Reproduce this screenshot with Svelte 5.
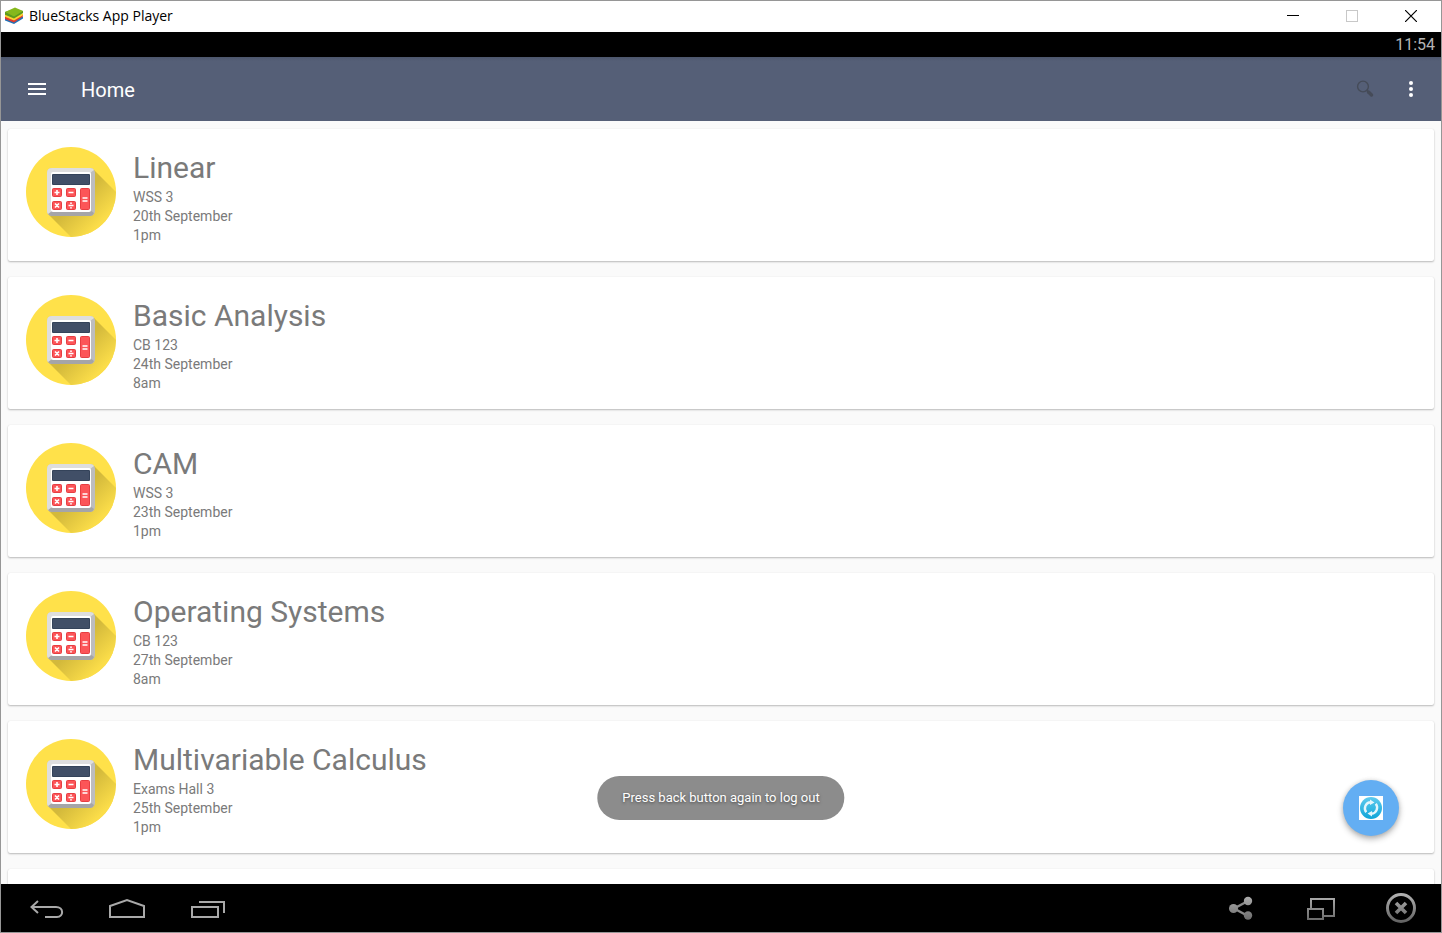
<script>
  const exams = [
    { name: 'Linear', venue: 'WSS 3', date: '20th September', time: '1pm' },
    { name: 'Basic Analysis', venue: 'CB 123', date: '24th September', time: '8am' },
    { name: 'CAM', venue: 'WSS 3', date: '23th September', time: '1pm' },
    { name: 'Operating Systems', venue: 'CB 123', date: '27th September', time: '8am' },
    { name: 'Multivariable Calculus', venue: 'Exams Hall 3', date: '25th September', time: '1pm' },
    { name: '', venue: '', date: '', time: '' }
  ];
</script>

<svg class="defs" width="0" height="0" aria-hidden="true">
  <defs>
    <linearGradient id="shade" gradientUnits="userSpaceOnUse" x1="40" y1="40" x2="75" y2="75">
      <stop offset="0.35" stop-color="#d3b93b" />
      <stop offset="1" stop-color="#fbdd49" />
    </linearGradient>
    <linearGradient id="metal" gradientUnits="userSpaceOnUse" x1="0" y1="0" x2="0" y2="30">
      <stop offset="0" stop-color="#b4b4b4" />
      <stop offset="1" stop-color="#606060" />
    </linearGradient>
    <linearGradient id="aqua" x1="0" y1="0" x2="0" y2="1">
      <stop offset="0" stop-color="#5fcbee" />
      <stop offset="1" stop-color="#0fa5d8" />
    </linearGradient>
    <clipPath id="disc"><circle cx="45" cy="45" r="45" /></clipPath>
  </defs>
</svg>

{#snippet calculator()}
  <svg class="calculator" width="90" height="90" viewBox="0 0 90 90" aria-hidden="true">
    <circle cx="45" cy="45" r="45" fill="#ffe14a" />
    <path d="M68 23 L98 53 L98 98 L53 98 L22 67 Z" fill="url(#shade)" clip-path="url(#disc)" />
    <rect x="21" y="21" width="48" height="48" rx="5" fill="#bdbdbf" />
    <path d="M22 66 L26 63 H64 L68 66 Q67 69 64 69 H26 Q23 69 22 66Z" fill="#a5a5a8" />
    <path d="M26 21 H64 Q67 21 68 23 L64 26 H26 V64 L22 67 Q21 66 21 64 V26 Q21 21 26 21Z" fill="#dedede" />
    <rect x="25" y="25" width="40" height="40" rx="2" fill="#fff" />
    <rect x="26" y="27" width="38" height="11" rx="1" fill="#34435a" />
    <rect x="27" y="28" width="36" height="9" fill="#414f67" />
    <g fill="#fc5558" stroke="#e73e42">
      <rect x="26.500" y="41.500" width="9" height="8" rx="1" />
      <rect x="40.500" y="41.500" width="9" height="8" rx="1" />
      <rect x="26.500" y="54.500" width="9" height="8" rx="1" />
      <rect x="40.500" y="54.500" width="9" height="8" rx="1" />
      <rect x="54.500" y="41.500" width="9" height="21" rx="1" />
    </g>
    <path d="M28.500 45.500 H33.500 M31 43 V48 M42.500 45.500 H47.500 M29 56.500 L33 60.500 M33 56.500 L29 60.500 M42.500 58.500 H47.500 M56.500 51 H61.500 M56.500 54 H61.500" stroke="#fff" stroke-width="1.600" />
    <circle cx="45" cy="56.200" r="0.900" fill="#fff" />
    <circle cx="45" cy="60.800" r="0.900" fill="#fff" />
  </svg>
{/snippet}

<div class="window">
  <header class="titlebar">
    <svg width="18" height="18" viewBox="0 0 18 18" aria-hidden="true">
      <path d="M0 10 H18 V11.500 L9 17 L0 13.500Z" fill="#2073b8" />
      <path d="M0 8 H18 V9.500 L9 15.500 L0 12Z" fill="#e13a2e" />
      <path d="M0 6.500 H18 V8.200 L9 13.500 L0 9.800Z" fill="#fbd330" />
      <path d="M0 5 L9 2 L18 4 V6 L9 11.500 L0 7.800Z" fill="#5b9a1d" />
      <path d="M0 5 L10 0.500 L18 4 L9 9.500Z" fill="#86b81c" />
    </svg>
    <h1>BlueStacks App Player</h1>
    <div class="window-controls">
      <button aria-label="Minimize">
        <svg width="12" height="12" viewBox="0 0 12 12"><path d="M0 5.500H12" stroke="#000" /></svg>
      </button>
      <button aria-label="Maximize" disabled>
        <svg width="12" height="12" viewBox="0 0 12 12"><rect x="0.500" y="0.500" width="11" height="11" fill="none" stroke="#c8c8c8" /></svg>
      </button>
      <button aria-label="Close">
        <svg width="12" height="12" viewBox="0 0 12 12"><path d="M0 0L12 12M12 0L0 12" stroke="#000" stroke-width="1.200" /></svg>
      </button>
    </div>
  </header>

  <div class="statusbar"><time>11:54</time></div>

  <nav class="appbar" aria-label="App bar">
    <button aria-label="Open menu">
      <svg width="18" height="12" viewBox="0 0 18 12"><path d="M0 1H18M0 6H18M0 11H18" stroke="#fff" stroke-width="2" /></svg>
    </button>
    <h2>Home</h2>
    <button aria-label="Search">
      <svg width="18" height="18" viewBox="0 0 18 18" fill="none" stroke="#454b58">
        <circle cx="7" cy="6.500" r="5.400" stroke-width="1.400" />
        <path d="M10.500 10L12.500 12" stroke-width="1.500" />
        <path d="M12.500 12L15.500 15" stroke-width="3.400" stroke-linecap="round" />
      </svg>
    </button>
    <button aria-label="More options">
      <svg width="4" height="16" viewBox="0 0 4 16" fill="#fff"><circle cx="2" cy="2" r="2" /><circle cx="2" cy="8" r="2" /><circle cx="2" cy="14" r="2" /></svg>
    </button>
  </nav>

  <main>
    <ul class="exams">
      {#each exams as exam}
        <li class="card">
          {@render calculator()}
          <div class="details">
            <h3>{exam.name}</h3>
            <p>{exam.venue}</p>
            <p>{exam.date}</p>
            <p>{exam.time}</p>
          </div>
        </li>
      {/each}
    </ul>
    <div class="toast" role="status">Press back button again to log out</div>
    <button class="fab" aria-label="Refresh">
      <svg width="24" height="24" viewBox="0 0 24 24">
        <rect width="24" height="24" fill="#fff" />
        <circle cx="12" cy="12" r="11" fill="url(#aqua)" />
        <g fill="none" stroke="#e4f6fc" stroke-width="2.400">
          <path d="M7.200 16.200 A6.300 6.300 0 0 1 11 6.200" />
          <path d="M16.800 7.800 A6.300 6.300 0 0 1 13 17.800" />
        </g>
        <path d="M11 3.500 L15.500 6.500 L11 9Z M13 20.500 L8.500 17.500 L13 15Z" fill="#e4f6fc" />
      </svg>
    </button>
  </main>

  <footer class="navbar">
    <button aria-label="Back">
      <svg width="34" height="30" viewBox="0 -1 34 30" fill="none" stroke="#a9a9a9" stroke-width="2">
        <path d="M1.500 13H26C34 13 34 23 27 23H15M8 7L1.500 13L8 19" />
      </svg>
    </button>
    <button aria-label="Home">
      <svg width="36" height="30" viewBox="0 -1 36 30" fill="none" stroke="#a9a9a9" stroke-width="2">
        <path d="M1 23V12L18 6L35 12V23Z" />
      </svg>
    </button>
    <button aria-label="Recent apps">
      <svg width="36" height="30" viewBox="0 -1 36 30" fill="none" stroke="#a9a9a9" stroke-width="2">
        <path d="M3 13H29V23H3ZM10 8H35V19" />
      </svg>
    </button>
    <button class="share" aria-label="Share">
      <svg width="24" height="30" viewBox="0 -1 24 30" fill="url(#metal)">
        <path d="M5 14.500L19 7M5 14.500L19 22" stroke="#8a8a8a" stroke-width="2.500" />
        <circle cx="4.500" cy="14.500" r="4.500" /><circle cx="19" cy="7" r="4.200" /><circle cx="19" cy="21.500" r="4.200" />
      </svg>
    </button>
    <button aria-label="Resize window">
      <svg width="28" height="30" viewBox="0 -1 28 30" fill="none" stroke="url(#metal)" stroke-width="2">
        <path d="M4 15V5H27V22H17M1 15H16V25H1Z" />
      </svg>
    </button>
    <button aria-label="Close app">
      <svg width="30" height="30" viewBox="0 0 30 30" fill="none" stroke="url(#metal)">
        <circle cx="15" cy="15" r="13.500" stroke-width="3" />
        <path d="M10 10L20 20M20 10L10 20" stroke-width="3.600" />
      </svg>
    </button>
  </footer>
</div>

<style>
  :global(body) {
    margin: 0;
    overflow: hidden;
  }
  .defs {
    position: absolute;
  }
  .window {
    display: flex;
    flex-direction: column;
    box-sizing: border-box;
    height: 100vh;
    border: 1px solid #969696;
    background: #fafafa;
    font-family: Roboto, sans-serif;
  }
  h1, h2, h3, p, ul {
    margin: 0;
    padding: 0;
    font-weight: 400;
  }
  svg {
    display: block;
    flex: none;
  }
  button {
    display: flex;
    align-items: center;
    justify-content: center;
    padding: 0;
    border: 0;
    background: none;
  }
  .titlebar {
    display: flex;
    align-items: center;
    gap: 6px;
    box-sizing: border-box;
    height: 31px;
    padding: 0 0 1px 4px;
    background: #fff;
  }
  h1 {
    flex: 1;
    font: 14px/20px "Open Sans", sans-serif;
    color: #000;
  }
  .window-controls {
    display: flex;
    gap: 13px;
    padding-right: 7px;
  }
  .window-controls button {
    width: 46px;
    height: 30px;
  }
  .statusbar {
    height: 25px;
    padding-right: 6px;
    background: #000;
    color: #b5b5b5;
    font-size: 16px;
    line-height: 25px;
    text-align: right;
  }
  .appbar {
    display: flex;
    align-items: center;
    height: 64px;
    padding: 0 6px 0 12px;
    background: linear-gradient(#4c566c, #555f77 4px);
  }
  .appbar button {
    width: 48px;
    height: 48px;
  }
  .appbar button:last-child {
    margin-left: -2px;
  }
  h2 {
    flex: 1;
    padding: 2px 0 0 20px;
    font-size: 20px;
    line-height: 28px;
    color: #fff;
  }
  main {
    position: relative;
    flex: 1;
    min-height: 0;
    overflow: hidden;
  }
  .exams {
    display: flex;
    flex-direction: column;
    gap: 16px;
    padding: 8px 7px;
    list-style: none;
  }
  .card {
    display: flex;
    gap: 17px;
    box-sizing: border-box;
    min-height: 132px;
    padding: 18px 18px 16px;
    border-radius: 2px;
    background: #fff;
    box-shadow: 0 1px 2px rgba(0, 0, 0, 0.26), 0 0 1px rgba(0, 0, 0, 0.1);
  }
  .details {
    color: #7a7a7a;
  }
  h3 {
    font-size: 30px;
    line-height: 41px;
  }
  p {
    font-size: 14px;
    line-height: 19px;
  }
  .toast {
    position: absolute;
    bottom: 64px;
    left: 50%;
    padding: 0 25px;
    border-radius: 22px;
    background: #8c8c8c;
    color: #fff;
    font-size: 13px;
    line-height: 44px;
    white-space: nowrap;
    text-shadow: 0 1px 3px rgba(0, 0, 0, 0.5);
    transform: translateX(-50%);
  }
  .fab {
    position: absolute;
    right: 42px;
    bottom: 48px;
    width: 56px;
    height: 56px;
    border-radius: 50%;
    background: #63aef3;
    box-shadow: 0 3px 6px rgba(0, 0, 0, 0.3), 0 0 4px rgba(0, 0, 0, 0.1);
  }
  .navbar {
    display: flex;
    align-items: center;
    gap: 32px;
    height: 48px;
    padding: 0 16px 0 22px;
    background: #000;
  }
  .navbar button {
    width: 48px;
    height: 48px;
  }
  .navbar .share {
    margin-left: auto;
  }
</style>
